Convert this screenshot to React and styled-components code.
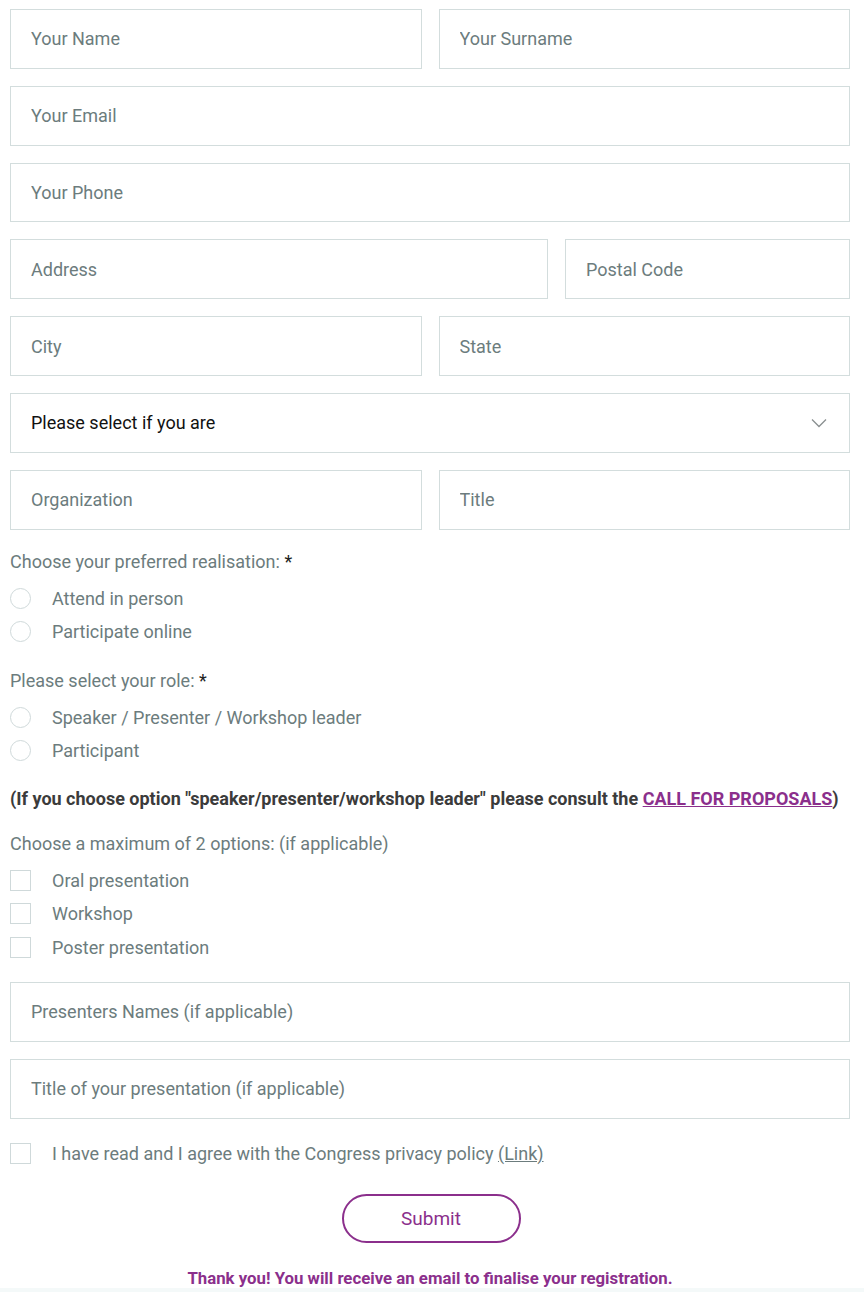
import React from "react";
import styled, { createGlobalStyle } from "styled-components";

const GlobalStyle = createGlobalStyle`
  body {
    margin: 0;
    background: #ffffff;
    font-family: Roboto, "Liberation Sans", sans-serif;
  }
`;

const purple = "#8b2f8c";
const grey = "#6c7c7d";
const line = "#d3dddd";

function App() {
  return (
    <>
      <GlobalStyle />
      <Page>
        <Form>
          <Row cols="1fr 1fr">
            <Field placeholder="Your Name" />
            <Field placeholder="Your Surname" />
          </Row>
          <Field placeholder="Your Email" />
          <Field placeholder="Your Phone" />
          <Row cols="538fr 285fr">
            <Field placeholder="Address" />
            <Field placeholder="Postal Code" />
          </Row>
          <Row cols="1fr 1fr">
            <Field placeholder="City" />
            <Field placeholder="State" />
          </Row>
          <Select>
            <span>Please select if you are</span>
            <svg width="16" height="10" viewBox="0 0 16 10">
              <path d="M1 1.5l7 7 7-7" fill="none" stroke="#8a8f90" strokeWidth="1.3" />
            </svg>
          </Select>
          <Row cols="1fr 1fr">
            <Field placeholder="Organization" />
            <Field placeholder="Title" />
          </Row>
        </Form>

        <Group top={20}>
          <GroupLabel>
            Choose your preferred realisation: <Star>*</Star>
          </GroupLabel>
          <Options>
            <Option>
              <Radio />
              Attend in person
            </Option>
            <Option>
              <Radio />
              Participate online
            </Option>
          </Options>
        </Group>

        <Group top={20}>
          <GroupLabel>
            Please select your role: <Star>*</Star>
          </GroupLabel>
          <Options>
            <Option>
              <Radio />
              Speaker / Presenter / Workshop leader
            </Option>
            <Option>
              <Radio />
              Participant
            </Option>
          </Options>
        </Group>

        <Note>
          (If you choose option "speaker/presenter/workshop leader" please consult the{" "}
          <NoteLink href="#">CALL FOR PROPOSALS</NoteLink>)
        </Note>

        <Group top={21}>
          <GroupLabel>Choose a maximum of 2 options: (if applicable)</GroupLabel>
          <Options>
            <Option>
              <Box />
              Oral presentation
            </Option>
            <Option>
              <Box />
              Workshop
            </Option>
            <Option>
              <Box />
              Poster presentation
            </Option>
          </Options>
        </Group>

        <Form top={18}>
          <Field placeholder="Presenters Names (if applicable)" />
          <Field placeholder="Title of your presentation (if applicable)" />
        </Form>

        <Consent>
          <Box />
          <span>
            I have read and I agree with the Congress privacy policy <PolicyLink href="#">(Link)</PolicyLink>
          </span>
        </Consent>

        <Actions>
          <SubmitButton type="button">Submit</SubmitButton>
        </Actions>

        <Thanks>Thank you! You will receive an email to finalise your registration.</Thanks>
      </Page>
      <Strip />
    </>
  );
}

export default App;

const Page = styled.div`
  padding: 9px 14px 0 10px;
`;

const Form = styled.div`
  display: flex;
  flex-direction: column;
  gap: 17px;
  margin-top: ${(props) => props.top || 0}px;
`;

const Row = styled.div`
  display: grid;
  grid-template-columns: ${(props) => props.cols};
  gap: 17px;
`;

const Field = styled.input`
  box-sizing: border-box;
  width: 100%;
  height: 59.8px;
  padding: 0 20px;
  border: 1px solid ${line};
  border-radius: 0;
  background: #fff;
  font-family: Roboto, "Liberation Sans", sans-serif;
  font-size: 18px;
  color: ${grey};
  outline: none;

  &::placeholder {
    color: ${grey};
    opacity: 1;
  }
`;

const Select = styled.div`
  box-sizing: border-box;
  height: 59.8px;
  padding: 0 22px 0 20px;
  border: 1px solid ${line};
  display: flex;
  align-items: center;
  justify-content: space-between;
  font-size: 18px;
  color: #111;
`;

const Group = styled.div`
  margin-top: ${(props) => props.top}px;
`;

const GroupLabel = styled.div`
  font-size: 18px;
  line-height: 24px;
  color: ${grey};
`;

const Star = styled.span`
  color: #222;
`;

const Options = styled.div`
  margin-top: 8px;
  display: flex;
  flex-direction: column;
`;

const Option = styled.label`
  display: flex;
  align-items: center;
  gap: 21px;
  height: 33.5px;
  font-size: 18px;
  color: ${grey};
`;

const Radio = styled.span`
  box-sizing: border-box;
  width: 21px;
  height: 21px;
  border: 1px solid #cfd9da;
  border-radius: 50%;
  flex-shrink: 0;
`;

const Box = styled.span`
  box-sizing: border-box;
  width: 21px;
  height: 21px;
  border: 1px solid #cfd9da;
  flex-shrink: 0;
`;

const Note = styled.div`
  margin-top: 19px;
  font-size: 18px;
  line-height: 24px;
  font-weight: 700;
  color: #3b3b3b;
`;

const NoteLink = styled.a`
  color: ${purple};
  text-decoration: underline;
`;

const Consent = styled.label`
  margin-top: 18px;
  display: flex;
  align-items: center;
  gap: 21px;
  height: 33px;
  font-size: 18px;
  color: ${grey};
`;

const PolicyLink = styled.a`
  color: ${grey};
  text-decoration: underline;
`;

const Actions = styled.div`
  margin-top: 24px;
  display: flex;
  justify-content: center;
`;

const SubmitButton = styled.button`
  box-sizing: border-box;
  width: 179px;
  height: 49px;
  margin-left: 2px;
  border: 2px solid ${purple};
  border-radius: 25px;
  background: #fff;
  font-family: Roboto, "Liberation Sans", sans-serif;
  font-size: 19px;
  color: ${purple};
`;

const Thanks = styled.div`
  margin-top: 25px;
  text-align: center;
  font-size: 16.8px;
  line-height: 20px;
  font-weight: 700;
  color: ${purple};
`;

const Strip = styled.div`
  height: 6px;
  background: #f4f9f9;
`;
